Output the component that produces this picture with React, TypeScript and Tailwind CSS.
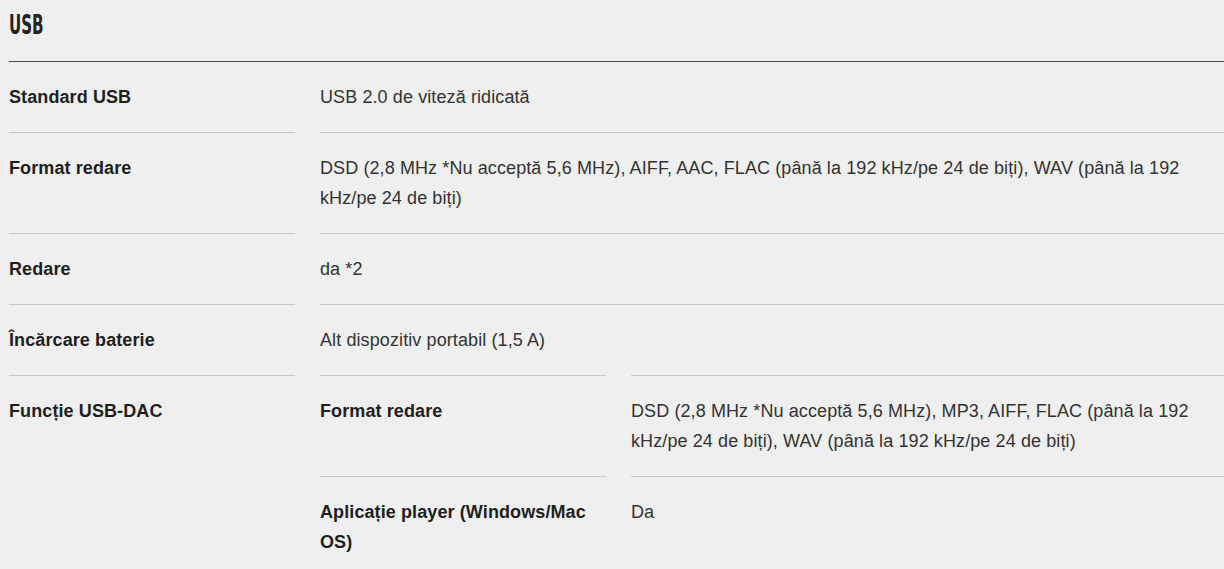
const rows = [
  { label: "Standard USB", value: "USB 2.0 de viteză ridicată" },
  {
    label: "Format redare",
    value:
      "DSD (2,8 MHz *Nu acceptă 5,6 MHz), AIFF, AAC, FLAC (până la 192 kHz/pe 24 de biți), WAV (până la 192 kHz/pe 24 de biți)",
  },
  { label: "Redare", value: "da *2" },
  { label: "Încărcare baterie", value: "Alt dispozitiv portabil (1,5 A)" },
]

const dacRows = [
  {
    label: "Format redare",
    value:
      "DSD (2,8 MHz *Nu acceptă 5,6 MHz), MP3, AIFF, FLAC (până la 192 kHz/pe 24 de biți), WAV (până la 192 kHz/pe 24 de biți)",
  },
  { label: "Aplicație player (Windows/Mac OS)", value: "Da" },
]

export default function App() {
  return (
    <div className="min-h-screen bg-[#efefef] pl-[9px] font-['Liberation_Sans',Arial,sans-serif] text-[18px] leading-[30px] tracking-[0.1px]">
      {/* Section title */}
      <div className="h-[62px] border-b border-[#4a4a4a] pt-[5px]">
        <h2 className="inline-block origin-left scale-x-[0.62] font-['Liberation_Sans_Narrow','DejaVu_Sans_Condensed',sans-serif] text-[27px] font-bold leading-[40px] tracking-normal text-[#222]">
          USB
        </h2>
      </div>

      {/* Spec rows */}
      <div className="grid grid-cols-[286px_1fr] gap-x-[25px]">
        {rows.map((row, i) => (
          <div key={row.label} className="contents">
            <div className={`py-5 font-bold text-[#1e1e1e] ${i > 0 ? "border-t border-[#c9c9c9]" : ""}`}>
              {row.label}
            </div>
            <div className={`py-5 text-[#333] ${i > 0 ? "border-t border-[#c9c9c9]" : ""}`}>
              {row.value}
            </div>
          </div>
        ))}

        <div className="border-t border-[#c9c9c9] py-5 font-bold text-[#1e1e1e]">Funcție USB-DAC</div>
        <div className="grid grid-cols-[286px_1fr] gap-x-[25px]">
          {dacRows.map((row) => (
            <div key={row.label} className="contents">
              <div className="border-t border-[#c9c9c9] py-5 font-bold text-[#1e1e1e]">{row.label}</div>
              <div className="border-t border-[#c9c9c9] py-5 text-[#333]">{row.value}</div>
            </div>
          ))}
        </div>
      </div>
    </div>
  )
}
